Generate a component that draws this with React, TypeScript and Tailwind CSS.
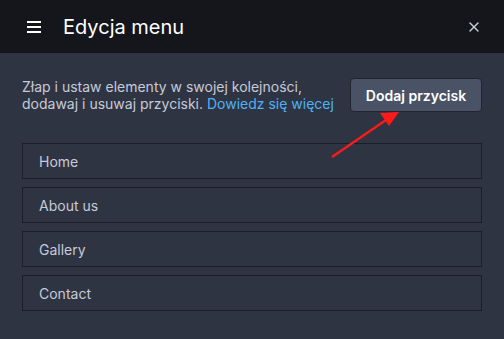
import { X } from 'lucide-react';

const items = ['Home', 'About us', 'Gallery', 'Contact'];

const App = () => {
  return (
    <div className="relative w-[504px] h-[339px] bg-[#2f3443] font-['Inter',sans-serif] overflow-hidden">
      <div className="flex items-center h-[53px] bg-[#14161c] pl-[27px] pr-[22px]">
        <div className="flex flex-col gap-[3px] w-[14px]">
          <span className="h-[2px] bg-white" />
          <span className="h-[2px] bg-white" />
          <span className="h-[2px] bg-white" />
        </div>
        <h1 className="ml-[22px] text-[20px] text-white">Edycja menu</h1>
        <X className="ml-auto text-[#c9ccd4]" size={16} strokeWidth={2.2} />
      </div>

      <div className="px-[22px] pt-[25px]">
        <div className="flex items-start justify-between">
          <p className="text-[14px] leading-[17px] text-[#c5cbd8] w-[320px]">
            Złap i ustaw elementy w swojej kolejności, dodawaj i usuwaj przyciski.{' '}
            <span className="text-[#4db2f5]">Dowiedz się więcej</span>
          </p>
          <button className="h-[34px] w-[132px] rounded-[4px] border border-[#22252e] bg-[#4a5265] text-[14px] font-semibold text-white">
            Dodaj przycisk
          </button>
        </div>

        <div className="mt-[31px] flex flex-col gap-[8px]">
          {items.map((item) => (
            <div
              key={item}
              className="flex items-center h-[36px] border border-[#1b1e27] px-[16px] text-[14px] text-[#c5cbd8]"
            >
              {item}
            </div>
          ))}
        </div>
      </div>

      <svg className="absolute left-0 top-0 pointer-events-none" width="504" height="339">
        <line x1="332" y1="157" x2="386" y2="120" stroke="#ff1a1a" strokeWidth="2.2" />
        <polygon points="399,112 380,113 389,126" fill="#ff1a1a" />
      </svg>
    </div>
  );
};

export default App;
